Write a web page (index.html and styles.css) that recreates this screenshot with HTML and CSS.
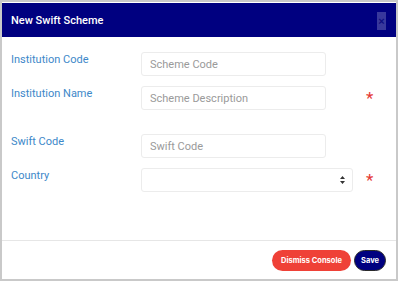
FILE: index.html
```html
<!DOCTYPE html>
<html lang="en">
<head>
    <meta charset="UTF-8">
    <title>New Swift Scheme</title>
    <link rel="stylesheet" href="styles.css">
</head>
<body>

    <div class="modal">
        <div class="modal-header">
            <h4>New Swift Scheme</h4>
            <button type="button" class="btn-close">&times;</button>
        </div>

        <form class="modal-body">
            <div class="form-row">
                <label for="instCode">Institution Code</label>
                <input type="text" id="instCode" class="field" placeholder="Scheme Code">
            </div>
            <div class="form-row">
                <label for="instName">Institution Name</label>
                <input type="text" id="instName" class="field" placeholder="Scheme Description">
                <span class="required">*</span>
            </div>
            <div class="form-row spaced">
                <label for="swiftCode">Swift Code</label>
                <input type="text" id="swiftCode" class="field" placeholder="Swift Code">
            </div>
            <div class="form-row">
                <label for="country">Country</label>
                <div class="select-wrap">
                    <select id="country" class="field field-select">
                        <option value=""></option>
                    </select>
                    <span class="select-arrows">
                        <svg width="5" height="8" viewBox="0 0 5 8"><path d="M0 3 L2.5 0 L5 3 Z M0 5 L2.5 8 L5 5 Z" fill="#333"/></svg>
                    </span>
                </div>
                <span class="required">*</span>
            </div>
        </form>

        <div class="modal-footer">
            <button type="button" class="btn btn-dismiss">Dismiss Console</button>
            <button type="submit" class="btn btn-save">Save</button>
        </div>
    </div>

</body>
</html>
```

FILE: styles.css
```css
/* Page */
body {
    margin: 0;
    background-color: #ffffff;
    font-family: Roboto, "Liberation Sans", sans-serif;
}

/* Modal box */
.modal {
    width: 394px;
    height: 277px;
    border: 2px solid #c9c9c9;
    background-color: #ffffff;
    display: flex;
    flex-direction: column;
}

.modal-header {
    background-color: #000080;
    height: 34px;
    margin-top: 1px;
    display: flex;
    align-items: center;
    justify-content: space-between;
    padding: 0 10px 0 9px;
}

.modal-header h4 {
    margin: 0;
    color: #ffffff;
    font-size: 11px;
    font-weight: 500;
}

.btn-close {
    width: 9px;
    height: 18px;
    padding: 0;
    border: none;
    background-color: rgba(255, 255, 255, 0.22);
    color: #0d0d80;
    font-size: 11px;
    line-height: 18px;
    font-weight: bold;
    margin-top: 2px;
}

/* Form */
.modal-body {
    flex: 1;
    padding: 15px 0 0 9px;
    display: flex;
    flex-direction: column;
    gap: 10px;
}

.form-row {
    display: grid;
    grid-template-columns: 130px 225px auto;
    align-items: start;
}

.form-row.spaced {
    margin-top: 14px;
}

.form-row label {
    line-height: 16px;
    font-size: 11px;
    color: #3d88c9;
}

.field {
    width: 185px;
    height: 24px;
    box-sizing: border-box;
    border: 1px solid #ececec;
    border-radius: 3px;
    padding: 0 8px;
    font-family: Roboto, "Liberation Sans", sans-serif;
    font-size: 11px;
    color: #333;
    background-color: #ffffff;
}

.field::placeholder {
    color: #9a9a9a;
}

.select-wrap {
    position: relative;
    width: 212px;
}

.field-select {
    width: 212px;
    appearance: none;
    -webkit-appearance: none;
}

.select-arrows {
    position: absolute;
    right: 8px;
    top: 8px;
    line-height: 0;
}

.required {
    color: #e53935;
    font-size: 17px;
    line-height: 24px;
}

/* Footer */
.modal-footer {
    border-top: 1px solid #e6e6e6;
    height: 38px;
    display: flex;
    justify-content: flex-end;
    align-items: center;
    gap: 3px;
    padding-right: 10px;
}

.btn {
    height: 21px;
    border-radius: 11px;
    font-family: Inter, "Liberation Sans", sans-serif;
    font-size: 7.5px;
    font-weight: bold;
    color: #ffffff;
    padding: 0;
    margin-top: 1px;
}

.btn-dismiss {
    width: 79px;
    background-color: #ef4137;
    border: none;
}

.btn-save {
    width: 32px;
    background-color: #000080;
    border: 1px solid #2a2a2a;
}
```
